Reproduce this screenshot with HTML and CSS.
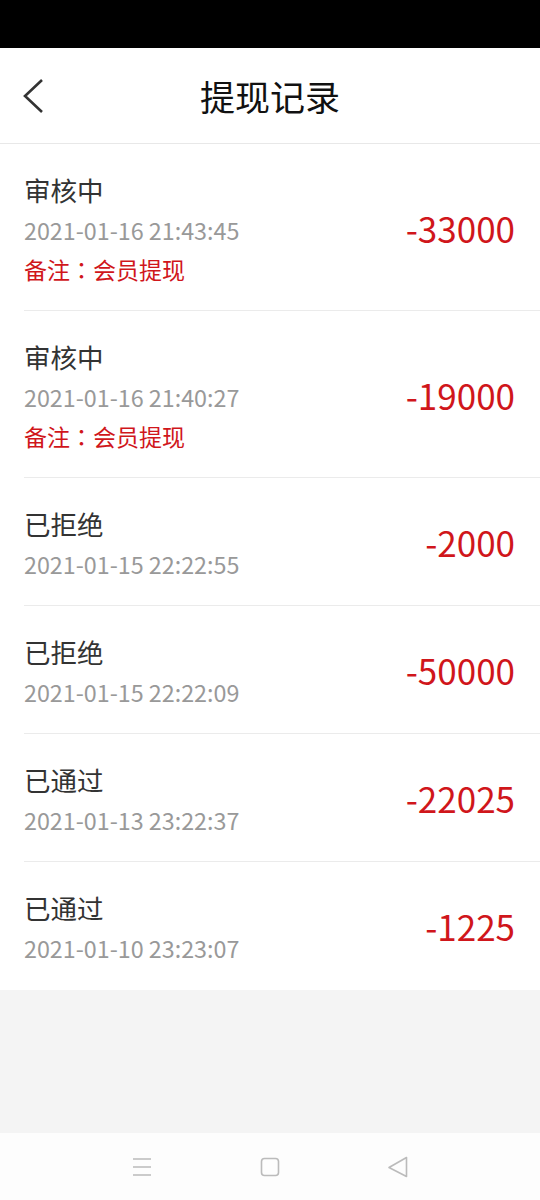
FILE: index.html
```html
<!DOCTYPE html>
<html lang="zh-CN">
<head>
    <meta charset="UTF-8">
    <meta name="viewport" content="width=device-width, initial-scale=1.0">
    <title>提现记录</title>
    <link rel="stylesheet" href="styles.css">
</head>
<body>
    <div class="status-bar"></div>

    <div class="header">
        <a class="back" href="#">
            <svg width="24" height="36" viewBox="0 0 24 36">
                <path d="M20 2 L3 18 L20 34" fill="none" stroke="#333" stroke-width="2.6"/>
            </svg>
        </a>
        <h1 class="title">提现记录</h1>
    </div>

    <div class="list">
        <div class="item">
            <div class="info">
                <div class="state">审核中</div>
                <div class="time">2021-01-16 21:43:45</div>
                <div class="note">备注<span class="colon" lang="ja">：</span>会员提现</div>
            </div>
            <div class="amount">-33000</div>
        </div>
        <div class="item">
            <div class="info">
                <div class="state">审核中</div>
                <div class="time">2021-01-16 21:40:27</div>
                <div class="note">备注<span class="colon" lang="ja">：</span>会员提现</div>
            </div>
            <div class="amount">-19000</div>
        </div>
        <div class="item">
            <div class="info">
                <div class="state">已拒绝</div>
                <div class="time">2021-01-15 22:22:55</div>
            </div>
            <div class="amount">-2000</div>
        </div>
        <div class="item">
            <div class="info">
                <div class="state">已拒绝</div>
                <div class="time">2021-01-15 22:22:09</div>
            </div>
            <div class="amount">-50000</div>
        </div>
        <div class="item">
            <div class="info">
                <div class="state">已通过</div>
                <div class="time">2021-01-13 23:22:37</div>
            </div>
            <div class="amount">-22025</div>
        </div>
        <div class="item">
            <div class="info">
                <div class="state">已通过</div>
                <div class="time">2021-01-10 23:23:07</div>
            </div>
            <div class="amount">-1225</div>
        </div>
    </div>

    <div class="filler"></div>

    <div class="nav-bar">
        <svg width="22" height="22" viewBox="0 0 22 22">
            <path d="M2 3 H20 M2 11 H20 M2 19 H20" stroke="#bbb" stroke-width="1.4"/>
        </svg>
        <svg width="22" height="22" viewBox="0 0 22 22">
            <rect x="2.5" y="2.5" width="17" height="17" rx="3" fill="none" stroke="#bbb" stroke-width="1.6"/>
        </svg>
        <svg width="22" height="22" viewBox="0 0 22 22">
            <path d="M19.5 1.5 V20.5 L2 11.5 Z" fill="none" stroke="#bbb" stroke-width="1.6" stroke-linejoin="round"/>
        </svg>
    </div>
</body>
</html>
```

FILE: styles.css
```css
body {
    margin: 0;
    width: 540px;
    height: 1200px;
    display: flex;
    flex-direction: column;
    background: #f4f4f4;
    font-family: "Noto Sans CJK SC", "Noto Sans", sans-serif;
}
.status-bar {
    height: 48px;
    background: #000;
}
.header {
    height: 95px;
    background: #fff;
    border-bottom: 1px solid #e8e8e8;
    display: flex;
    align-items: center;
    justify-content: center;
    position: relative;
}
.back {
    position: absolute;
    left: 22px;
    top: 30px;
    display: flex;
}
.title {
    margin: 0;
    font-size: 35px;
    font-weight: normal;
    color: #111;
}
.list {
    background: #fff;
    padding-bottom: 1px;
}
.item {
    margin-left: 24px;
    padding: 26px 25px 21px 0;
    display: flex;
    align-items: center;
    justify-content: space-between;
    border-bottom: 1px solid #ebebeb;
}
.item:last-child {
    border-bottom: none;
}
.state {
    height: 40px;
    font-size: 26.5px;
    line-height: 40px;
    color: #333;
}
.time {
    height: 40px;
    font-size: 23.3px;
    line-height: 40px;
    color: #999;
}
.note {
    height: 39px;
    font-size: 23px;
    line-height: 39px;
    color: #d0161b;
}
.colon {
    font-family: "Noto Sans CJK JP", sans-serif;
}
.amount {
    margin-bottom: 5px;
    font-size: 35px;
    color: #d0161b;
}
.filler {
    flex: 1;
}
.nav-bar {
    height: 67px;
    background: #fdfdfd;
    display: flex;
    align-items: center;
    justify-content: center;
    gap: 106px;
}
```
